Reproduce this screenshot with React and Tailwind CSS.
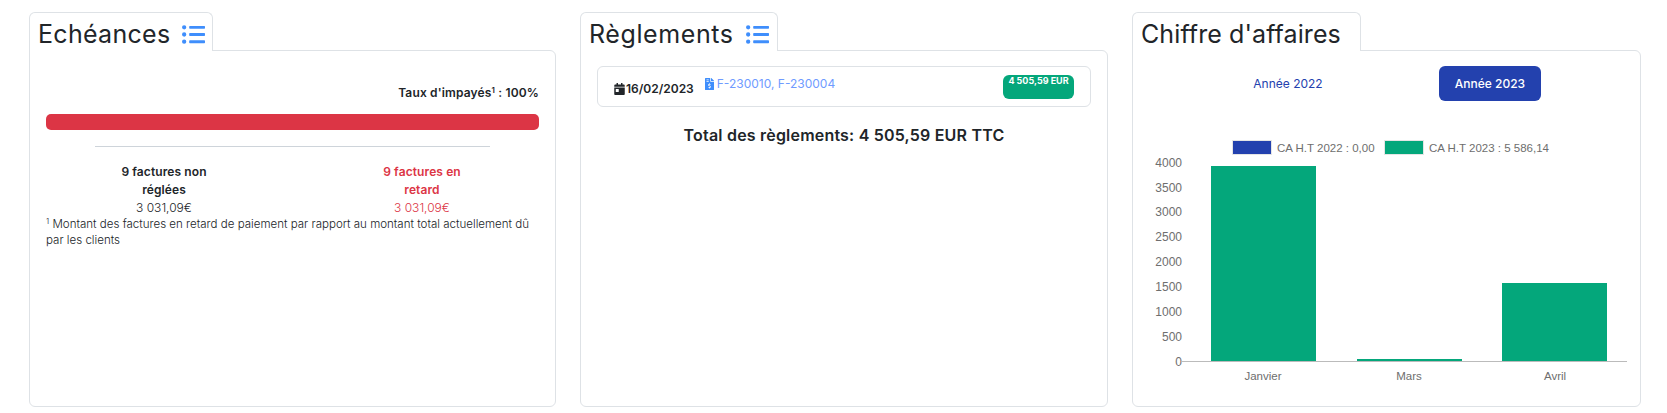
import React from 'react';
import { FaListUl, FaCalendarDay, FaFileInvoiceDollar } from 'react-icons/fa';

function Panel({ title, icon, tabWidth, tracking, children }) {
  return (
    <div className="flex flex-col h-full">
      <div className={`relative z-10 -mb-px h-[39px] ${tabWidth} flex items-center gap-[12px] pl-[8px] pt-[4px] bg-white border border-b-0 border-[#dee2e6] rounded-t-[6px]`}>
        <span className={`text-[25px] leading-none text-[#212529] ${tracking}`}>{title}</span>
        {icon && <FaListUl className="text-[#3f8efc] w-[23px] h-[23px]" />}
      </div>
      <div className="flex-1 border border-[#dee2e6] rounded-b-[6px] rounded-tr-[6px] bg-white">{children}</div>
    </div>
  );
}

function Echeances() {
  return (
    <div className="px-[16px] pt-[33px]">
      <div className="text-right text-[12px] leading-[18px] font-semibold tracking-[0.15px] text-[#212529]">
        Taux d'impayés<sup className="text-[8px]">1</sup> : 100%
      </div>
      <div className="mt-[12px] h-[16px] rounded-[5px] bg-[#dc3545]" />
      <div className="mx-[49px] mt-[16px] border-t border-[#ced4da]" />
      <div className="mt-[16px] flex text-center text-[12px] leading-[18px]">
        <div className="ml-[63px] w-[110px]">
          <div className="font-semibold tracking-[0.1px] text-[#212529]">9 factures non réglées</div>
          <div className="font-light text-[#212529]">3 031,09€</div>
        </div>
        <div className="ml-[148px] w-[110px]">
          <div className="font-semibold tracking-[0.1px] text-[#dc3545]">9 factures en retard</div>
          <div className="font-light text-[#dc3545]">3 031,09€</div>
        </div>
      </div>
      <p className="text-[11.55px] leading-[16px] font-light text-[#212529] -mt-px">
        <sup className="text-[8px]">1</sup> Montant des factures en retard de paiement par rapport au montant total actuellement dû par les clients
      </p>
    </div>
  );
}

function Reglements() {
  return (
    <div className="px-[16px] pt-[15px]">
      <div className="h-[41px] border border-[#dee2e6] rounded-[6px] pl-[16px] pr-[16px] flex items-start">
        <div className="flex items-center gap-[1px] mt-[13px] text-[12px] font-semibold text-[#212529]">
          <FaCalendarDay className="w-[11px] h-[12px]" />
          <span>16/02/2023</span>
        </div>
        <div className="flex items-center gap-[3px] ml-[11px] mt-[8px] text-[12px] text-[#6f9bff]">
          <FaFileInvoiceDollar className="w-[9px] h-[12px] text-[#3f8efc]" />
          <span>F-230010, F-230004</span>
        </div>
        <div className="ml-auto mt-[8px] w-[71px] h-[24px] rounded-[6px] bg-[#04a77b] text-white text-[9px] leading-none font-bold text-center pt-[1px]">
          4 505,59 EUR
        </div>
      </div>
      <div className="mt-[18px] text-center text-[16px] font-semibold leading-[20px] tracking-[0.2px] text-[#212529]">
        Total des règlements: 4 505,59 EUR TTC
      </div>
    </div>
  );
}

const yTicks = [4000, 3500, 3000, 2500, 2000, 1500, 1000, 500, 0];

function Chart() {
  return (
    <svg width="507" height="262" className="block" style={{ fontFamily: '"Liberation Sans", Arial, sans-serif' }}>
      <rect x="99.5" y="9.5" width="39" height="14" fill="#2341ae" stroke="#e5e5e5" strokeWidth="1" />
      <text x="144" y="21" fontSize="11.5" fill="#6e6e6e">CA H.T 2022 : 0,00</text>
      <rect x="251.5" y="9.5" width="39" height="14" fill="#04a77b" stroke="#e5e5e5" strokeWidth="1" />
      <text x="296" y="21" fontSize="11.5" fill="#6e6e6e">CA H.T 2023 : 5 586,14</text>
      {yTicks.map((t, i) => (
        <text key={t} x="49" y={35.7 + i * 24.85} textAnchor="end" fontSize="12" fill="#6e6e6e">{t}</text>
      ))}
      <rect x="78" y="35" width="105" height="195" fill="#04a77b" />
      <rect x="224" y="228" width="105" height="2" fill="#04a77b" />
      <rect x="369" y="152" width="105" height="78" fill="#04a77b" />
      <line x1="48" y1="230.5" x2="494" y2="230.5" stroke="#bbbbbb" />
      <text x="130" y="249" textAnchor="middle" fontSize="11.5" fill="#6e6e6e">Janvier</text>
      <text x="276" y="249" textAnchor="middle" fontSize="11.5" fill="#6e6e6e">Mars</text>
      <text x="422" y="249" textAnchor="middle" fontSize="11.5" fill="#6e6e6e">Avril</text>
    </svg>
  );
}

function ChiffreAffaires() {
  return (
    <div className="pt-[15px]">
      <div className="flex text-[12px] leading-none">
        <div className="ml-[67px] w-[176px] h-[35px] flex items-center justify-center text-[#2341ae]">Année 2022</div>
        <div className="ml-[63px] w-[102px] h-[35px] flex items-center justify-center rounded-[6px] bg-[#2341ae] text-white font-medium">Année 2023</div>
      </div>
      <div className="mt-[30px]"><Chart /></div>
    </div>
  );
}

export default function App() {
  return (
    <div className="w-[1667px] h-[413px] bg-white pl-[29px] pt-[12px] pb-[6px] overflow-hidden" style={{ fontFamily: 'Inter, "Noto Sans", sans-serif' }}>
      <div className="grid grid-cols-[527px_528px_509px] gap-x-[24px] h-full">
        <Panel title="Echéances" icon tabWidth="w-[184px]" tracking="tracking-[0.3px]"><Echeances /></Panel>
        <Panel title="Règlements" icon tabWidth="w-[198px]" tracking="tracking-[0.6px]"><Reglements /></Panel>
        <Panel title="Chiffre d'affaires" tabWidth="w-[229px]" tracking="tracking-[0.1px]"><ChiffreAffaires /></Panel>
      </div>
    </div>
  );
}
